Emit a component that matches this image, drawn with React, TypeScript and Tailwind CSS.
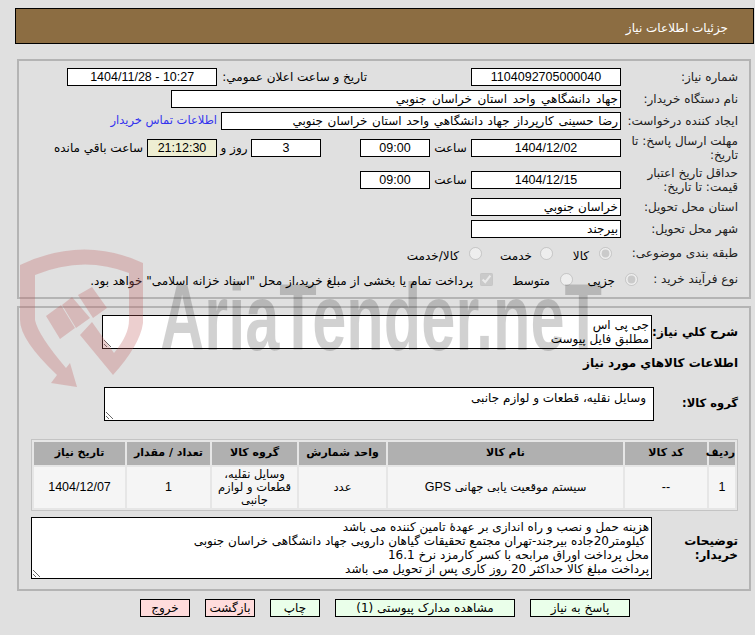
const font = { fontFamily: '"DejaVu Sans", Tahoma, sans-serif' }
const latin = "font-['Liberation_Sans',sans-serif] text-[12.5px]"

function Box({ children, className = '' }: { children?: React.ReactNode; className?: string }) {
  return (
    <div className={`h-[18px] shrink-0 border border-black bg-white leading-[16px] px-0.5 overflow-hidden whitespace-nowrap ${className}`}>
      {children}
    </div>
  )
}

function Label({ children, className = 'w-[116px]' }: { children: React.ReactNode; className?: string }) {
  return <div className={`shrink-0 leading-[14px] tracking-[0.2px] text-[#222] ${className}`}>{children}</div>
}

function Row({ className = '', children }: { className?: string; children: React.ReactNode }) {
  return <div className={`flex items-center ${className}`}>{children}</div>
}

const headers = ['ردیف', 'کد کالا', 'نام کالا', 'واحد شمارش', 'گروه کالا', 'تعداد / مقدار', 'تاریخ نیاز']
const widths = ['w-[26px]', 'w-[82px]', 'w-[235px]', 'w-[87px]', 'w-[85px]', 'w-[83px]', 'w-[91px]']

const buttons = [
  { text: 'پاسخ به نیاز', className: 'bg-[#eaffea] w-[100px]' },
  { text: 'مشاهده مدارک پیوستی (1)', className: 'bg-[#eaffea] w-[180px]' },
  { text: 'چاپ', className: 'bg-[#eaffea] w-[50px]' },
  { text: 'بازگشت', className: 'bg-[#ffdcdc] w-[50px]' },
  { text: 'خروج', className: 'bg-[#ffdcdc] w-[50px]' },
]

const buyerNote = `هزینه حمل و نصب و راه اندازی بر عهدهٔ تامین کننده می باشد
 کیلومتر20جاده بیرجند-تهران مجتمع تحقیقات گیاهان دارویی جهاد دانشگاهی خراسان جنوبی
محل پرداخت اوراق مرابحه با کسر کارمزد نرخ 16.1
پرداخت مبلغ کالا حداکثر 20 روز کاری پس از تحویل می باشد`

function Watermark() {
  return (
    <svg className="absolute left-0 top-0 pointer-events-none" width="755" height="635" viewBox="0 0 755 635">
      <g fill="#c05f5f" fillOpacity="0.3">
        <path d="M20 265 Q83 235 143 263 L143 323 Q140 345 113 375 L80 335 L92 322 L114 353 Q129 335 129 320 L129 273 Q83 255 35 275 L35 320 Q38 335 66 368 L70 363 L77 387 L51 383 L57 375 Q20 340 20 320 Z" />
        <path d="M46 316 L61 305 L75 328 L60 339 Z M62 305 L72 297 L90 318 L76 328 Z M78 295 L92 287 L107 308 L93 318 Z" />
      </g>
      <text x="160" y="350" direction="ltr" textAnchor="start" fontFamily="Liberation Sans, sans-serif" fontWeight="700" fontSize="94" fill="#000" fillOpacity="0.18" textLength="442" lengthAdjust="spacingAndGlyphs">AriaTender.neT</text>
    </svg>
  )
}

export default function App() {
  return (
    <div dir="rtl" style={font} className="relative w-[755px] h-[635px] overflow-hidden bg-[#e0e0e0] text-black text-[12px]">
      <div className="pt-2 pr-px pl-[15px]">
        <div className="h-[36px] bg-[#8c6d42] border border-black text-white leading-[38px] pr-[25px]">جزئیات اطلاعات نیاز</div>
      </div>

      <div className="mt-[15px] mr-1 ml-[17px] h-[240px] border-2 border-[#b4b4b4] pr-[11px] pt-[7px]">
        <Row className="h-[18px]">
          <Label>شماره نیاز:</Label>
          <Box className={`w-[150px] mr-px text-center ${latin}`}>1104092705000040</Box>
          <span className="mr-[104px] whitespace-nowrap">تاریخ و ساعت اعلان عمومي:</span>
          <Box className={`w-[150px] mr-[5px] text-center ${latin}`}>10:27 - 1404/11/28</Box>
        </Row>
        <Row className="h-[18px] mt-1">
          <Label>نام دستگاه خریدار:</Label>
          <Box className="w-[450px] mr-px [word-spacing:1.8px]">جهاد دانشگاهي واحد استان خراسان جنوبي</Box>
        </Row>
        <Row className="h-[18px] mt-1">
          <Label>ایجاد کننده درخواست:</Label>
          <Box className="w-[400px] mr-px [word-spacing:0.8px]">رضا حسینی کارپرداز جهاد دانشگاهي واحد استان خراسان جنوبي</Box>
          <span className="mr-1 text-[11.5px] text-[#3333ee] whitespace-nowrap">اطلاعات تماس خریدار</span>
        </Row>
        <Row className="h-[34px] mt-px">
          <Label>مهلت ارسال پاسخ: تا تاریخ:</Label>
          <Box className={`w-[150px] mr-px text-center ${latin}`}>1404/12/02</Box>
          <span className="w-[41px] text-center">ساعت</span>
          <Box className={`w-[70px] text-center ${latin}`}>09:00</Box>
          <Box className={`w-[70px] mr-[39px] text-center ${latin}`}>3</Box>
          <span className="w-[34px] text-center">روز و</span>
          <Box className={`w-[70px] !bg-[#eeeed2] text-center ${latin}`}>21:12:30</Box>
          <span className="mr-1 whitespace-nowrap">ساعت باقي مانده</span>
        </Row>
        <Row className="h-[34px] -mt-0.5">
          <Label>حداقل تاریخ اعتبار قیمت: تا تاریخ:</Label>
          <Box className={`w-[150px] mr-px text-center ${latin}`}>1404/12/15</Box>
          <span className="w-[41px] text-center">ساعت</span>
          <Box className={`w-[70px] text-center ${latin}`}>09:00</Box>
        </Row>
        <Row className="h-[18px] mt-px">
          <Label>استان محل تحویل:</Label>
          <Box className="w-[150px] mr-px">خراسان جنوبي</Box>
        </Row>
        <Row className="h-[18px] mt-1">
          <Label>شهر محل تحویل:</Label>
          <Box className="w-[150px] mr-px">بیرجند</Box>
        </Row>
        <Row className="h-[20px] mt-[5px]">
          <Label className="w-[126px] whitespace-nowrap">طبقه بندی موضوعی:</Label>
          <input type="radio" name="category" disabled defaultChecked />
          <span className="w-[36px] mr-2.5 mt-[5px]">کالا</span>
          <input type="radio" name="category" disabled />
          <span className="w-[50px] mr-2 mt-[5px]">خدمت</span>
          <input type="radio" name="category" disabled />
          <span className="mr-2.5 mt-[5px]">کالا/خدمت</span>
        </Row>
        <Row className="h-[20px] mt-1.5">
          <Label className="w-[100px] whitespace-nowrap">نوع فرآیند خرید :</Label>
          <input type="radio" name="process" disabled defaultChecked />
          <span className="w-[42px] mr-2.5 mt-1">جزیی</span>
          <input type="radio" name="process" disabled />
          <span className="w-[57px] mr-2.5 mt-1">متوسط</span>
          <input type="checkbox" disabled defaultChecked />
          <span className="mr-[7px] mt-1 whitespace-nowrap">پرداخت تمام یا بخشی از مبلغ خرید،از محل "اسناد خزانه اسلامی" خواهد بود.</span>
        </Row>
      </div>

      <div className="mt-[7px] mr-1 ml-[17px] h-[285px] border-2 border-[#b4b4b4] pr-[11px] pt-[7px]">
        <Row className="h-[34px]">
          <div className="w-[86px] shrink-0 font-bold whitespace-nowrap">شرح کلي نیاز:</div>
          <textarea
            readOnly
            className="w-[550px] h-[34px] border border-black bg-white px-0.5 pt-0.5 leading-[14px] overflow-hidden"
            value={'جی پی اس\nمطلبق فایل پیوست'}
          />
        </Row>
        <div className="font-bold mt-[6px] h-[16px] leading-[16px]">اطلاعات کالاهاي مورد نیاز</div>
        <Row className="h-[34px] mt-[16px]">
          <div className="w-[84px] shrink-0 font-bold text-[11.5px]">گروه کالا:</div>
          <textarea
            readOnly
            className="w-[550px] h-[34px] border border-black bg-white px-[7px] pt-[3px] leading-[14px] overflow-hidden"
            value="وسایل نقلیه، قطعات و لوازم جانبی"
          />
        </Row>
        <table className="mt-[18px] w-[707px] border border-[#c4c4c4] border-separate border-spacing-[2px] bg-[#e6e6e6] table-fixed">
          <thead>
            <tr>
              {headers.map((h, i) => (
                <th key={h} className={`${widths[i]} h-[23px] bg-[#b0b0b0] text-[11px] font-bold p-0 whitespace-nowrap`}>{h}</th>
              ))}
            </tr>
          </thead>
          <tbody>
            <tr className="text-[11.5px] leading-[13px] text-center">
              <td className={`h-[41px] bg-[#f5f5f5] p-0 ${latin}`}>1</td>
              <td className={`h-[41px] bg-[#f5f5f5] p-0 ${latin}`}>--</td>
              <td className="h-[41px] bg-[#f5f5f5] p-0">
                سیستم موقعیت یابی جهانی <span className={latin}>GPS</span>
              </td>
              <td className="h-[41px] bg-[#f5f5f5] p-0">عدد</td>
              <td className="h-[41px] bg-[#f5f5f5] p-0 px-1">وسایل نقلیه، قطعات و لوازم جانبی</td>
              <td className={`h-[41px] bg-[#f5f5f5] p-0 ${latin}`}>1</td>
              <td className={`h-[41px] bg-[#f5f5f5] p-0 ${latin}`}>1404/12/07</td>
            </tr>
          </tbody>
        </table>
        <Row className="h-[62px] mt-[6px]">
          <div className="w-[86px] shrink-0 font-bold leading-[14px]">توضیحات خریدار:</div>
          <textarea
            readOnly
            className="w-[621px] h-[62px] border border-black bg-white px-0.5 pt-0.5 leading-[14px] overflow-hidden"
            value={buyerNote}
          />
        </Row>
      </div>

      <div className="mt-2 pr-[125px] flex gap-[15px]">
        {buttons.map(b => (
          <div key={b.text} className={`h-[18px] border border-black text-center leading-[17px] ${b.className}`}>{b.text}</div>
        ))}
      </div>
      <Watermark />
    </div>
  )
}
